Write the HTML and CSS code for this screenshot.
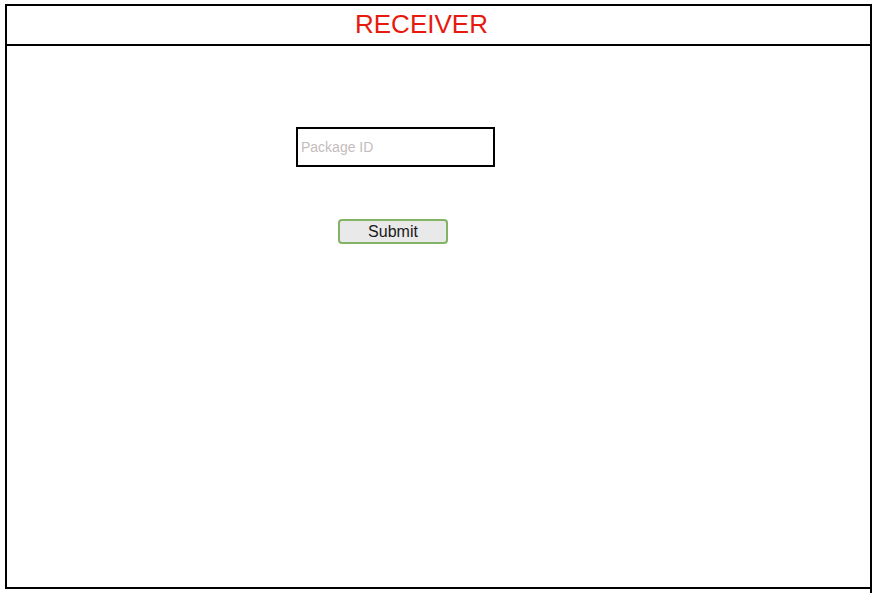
FILE: index.html
```html
<!DOCTYPE html>
<html>
<head>
<meta charset="utf-8">
<link rel="stylesheet" href="styles.css">
</head>
<body>
<div class="wrap">
  <div class="frame">
    <div class="header">RECEIVER</div>
    <div class="content">
      <input class="pkg" type="text" placeholder="Package ID">
      <button class="submit" type="button">Submit</button>
    </div>
  </div>
  <div class="rline"></div>
</div>
</body>
</html>
```
FILE: styles.css
```css
html, body {
  margin: 0;
  padding: 0;
  background: #fff;
  font-family: "Liberation Sans", Arial, sans-serif;
}
.wrap {
  display: flex;
  align-items: flex-start;
  padding: 4px 0 0 5px;
}
.frame {
  box-sizing: border-box;
  width: 865px;
  height: 585px;
  border-top: 2px solid #000;
  border-left: 2px solid #000;
  border-bottom: 2px solid #000;
  display: flex;
  flex-direction: column;
}
.rline {
  width: 2px;
  height: 589px;
  background: #000;
}
.header {
  box-sizing: border-box;
  height: 40px;
  border-bottom: 2px solid #000;
  padding-left: 348px;
  font-size: 26px;
  line-height: 37px;
  color: #e8190f;
}
.content {
  display: flex;
  flex-direction: column;
  align-items: flex-start;
}
.pkg {
  box-sizing: border-box;
  margin: 81px 0 0 289px;
  width: 199px;
  height: 40px;
  border: 2px solid #000;
  padding: 0 0 0 3px;
  font-family: "Liberation Sans", Arial, sans-serif;
  font-size: 14px;
  outline: none;
  background: #fff;
}
.pkg::placeholder {
  color: #c3bcbc;
  opacity: 1;
}
.submit {
  box-sizing: border-box;
  margin: 52px 0 0 331px;
  width: 110px;
  height: 25px;
  border: 2px solid #82b366;
  border-radius: 4px;
  background: #e9e9e9;
  font-family: "Liberation Sans", Arial, sans-serif;
  font-size: 16px;
  color: #1a1a1a;
  padding: 0;
}
```
